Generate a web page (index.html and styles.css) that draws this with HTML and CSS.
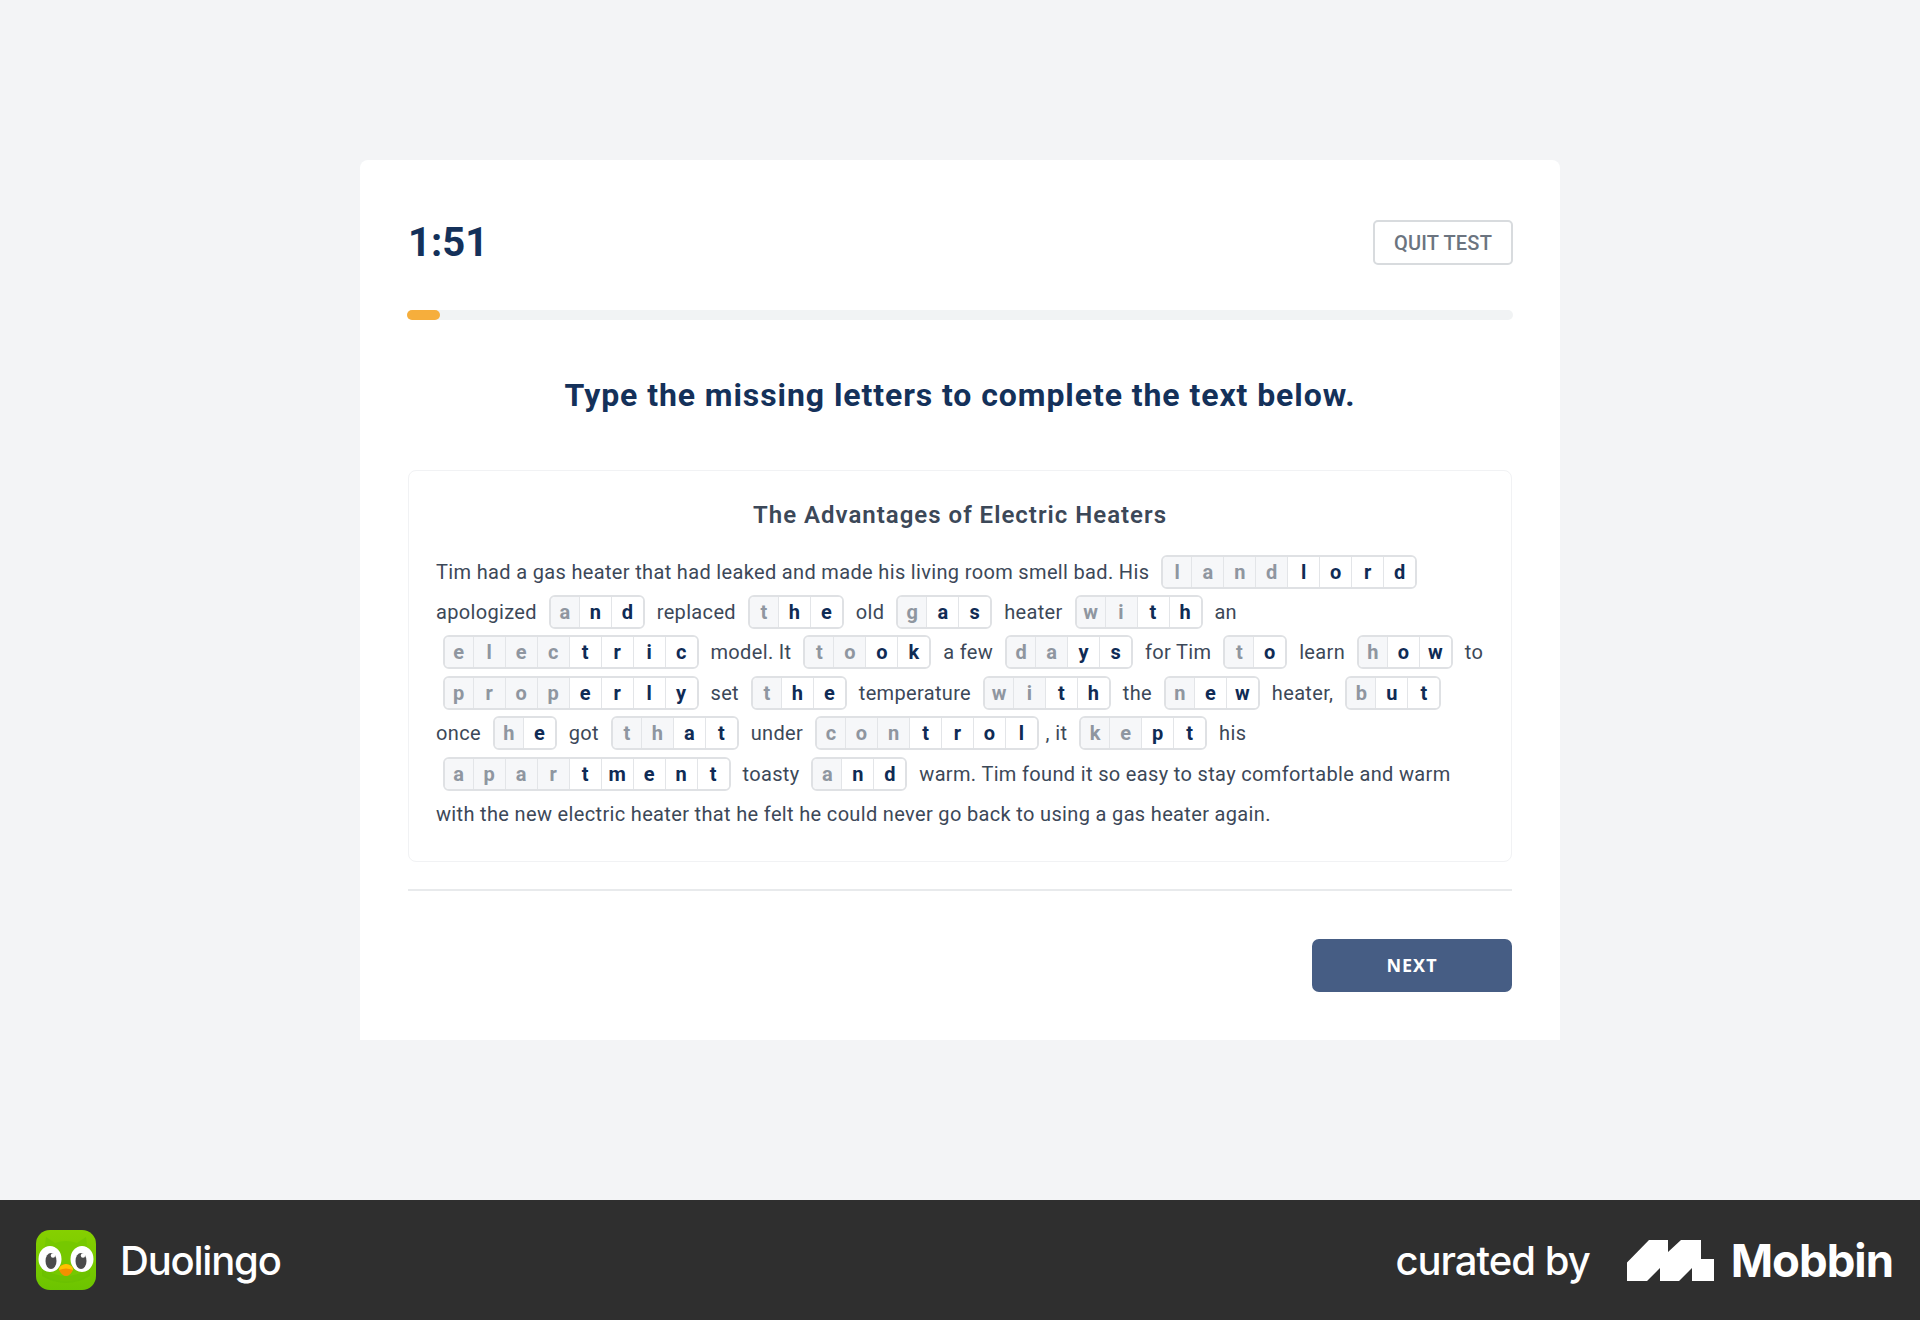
FILE: index.html
```html
<!DOCTYPE html>
<html lang="en">
<head>
<meta charset="utf-8">
<title>Duolingo English Test</title>
<link rel="stylesheet" href="styles.css">
</head>
<body>
<main class="stage">
  <section class="card">
    <header class="top">
      <div class="timer">1:51</div>
      <button class="quit">QUIT TEST</button>
    </header>
    <div class="track"><div class="fill"></div></div>
    <h1 class="prompt">Type the missing letters to complete the text below.</h1>
    <article class="passage">
      <h2 class="title">The Advantages of Electric Heaters</h2>
      <p class="body">Tim had a gas heater that had leaked and made his living room smell bad. His <span class="word"><i>l</i><i>a</i><i>n</i><i>d</i><b>l</b><b>o</b><b>r</b><b>d</b></span><br>
      apologized <span class="word"><i>a</i><b>n</b><b>d</b></span> replaced <span class="word"><i>t</i><b>h</b><b>e</b></span> old <span class="word"><i>g</i><b>a</b><b>s</b></span> heater <span class="word"><i>w</i><i>i</i><b>t</b><b>h</b></span> an<br>
      <span class="word"><i>e</i><i>l</i><i>e</i><i>c</i><b>t</b><b>r</b><b>i</b><b>c</b></span> model. It <span class="word"><i>t</i><i>o</i><b>o</b><b>k</b></span> a few <span class="word"><i>d</i><i>a</i><b>y</b><b>s</b></span> for Tim <span class="word"><i>t</i><b>o</b></span> learn <span class="word"><i>h</i><b>o</b><b>w</b></span> to<br>
      <span class="word"><i>p</i><i>r</i><i>o</i><i>p</i><b>e</b><b>r</b><b>l</b><b>y</b></span> set <span class="word"><i>t</i><b>h</b><b>e</b></span> temperature <span class="word"><i>w</i><i>i</i><b>t</b><b>h</b></span> the <span class="word"><i>n</i><b>e</b><b>w</b></span> heater, <span class="word"><i>b</i><b>u</b><b>t</b></span><br>
      once <span class="word"><i>h</i><b>e</b></span> got <span class="word"><i>t</i><i>h</i><b>a</b><b>t</b></span> under <span class="word"><i>c</i><i>o</i><i>n</i><b>t</b><b>r</b><b>o</b><b>l</b></span>, it <span class="word"><i>k</i><i>e</i><b>p</b><b>t</b></span> his<br>
      <span class="word"><i>a</i><i>p</i><i>a</i><i>r</i><b>t</b><b>m</b><b>e</b><b>n</b><b>t</b></span> toasty <span class="word"><i>a</i><b>n</b><b>d</b></span> warm. Tim found it so easy to stay comfortable and warm<br>
      with the new electric heater that he felt he could never go back to using a gas heater again.</p>
    </article>
    <hr class="rule">
    <div class="actions"><button class="next">NEXT</button></div>
  </section>
</main>
<footer class="brandbar">
  <div class="brand">
    <svg class="owl" viewBox="0 0 60 60" aria-hidden="true">
      <defs><linearGradient id="owlbg" x1="0" y1="0" x2="0" y2="1"><stop offset="0" stop-color="#86d000"/><stop offset="1" stop-color="#6cc400"/></linearGradient></defs>
      <rect width="60" height="60" rx="14" fill="url(#owlbg)"/>
      <path d="M10 7 L19 13 Q30 9 41 13 L50 7 L52 22 L52 45 Q30 58 8 45 L8 22 Z" fill="#76c800"/>
      <path d="M6 38 Q30 54 54 38 L54 46 Q30 60 6 46 Z" fill="#66bb00" opacity=".5"/>
      <ellipse cx="14" cy="29" rx="11.5" ry="13" fill="#fff"/>
      <ellipse cx="46" cy="29" rx="11.5" ry="13" fill="#fff"/>
      <ellipse cx="15" cy="31" rx="5.5" ry="8" fill="#4b4b4b"/>
      <ellipse cx="45" cy="31" rx="5.5" ry="8" fill="#4b4b4b"/>
      <circle cx="17" cy="25.5" r="2.2" fill="#fff"/>
      <circle cx="47" cy="25.5" r="2.2" fill="#fff"/>
      <path d="M30 34 Q37 35 37 40 Q34 46 30 46 Q26 46 23 40 Q23 35 30 34 Z" fill="#f49000"/>
      <path d="M30 34 Q37 35 37 40 Q30 37 23 40 Q23 35 30 34 Z" fill="#ffc200"/>
    </svg>
    <span class="brandname">Duolingo</span>
  </div>
  <div class="credit">
    <span class="curated">curated by</span>
    <svg class="mlogo" viewBox="0 0 87 41" aria-hidden="true"><path fill="#fff" d="M0 22.5 L22 0 L41 0 L41 12 L54 0 L74 0 L74 19 L87 19 L87 41 L65 41 L65 28 L52 41 L33 41 L33 28 L20 41 L0 41 Z"/></svg>
    <span class="mname">Mobbin</span>
  </div>
</footer>
</body>
</html>
```
FILE: styles.css
```css
* { box-sizing: border-box; }
html, body { margin: 0; padding: 0; }
body {
  width: 1920px;
  height: 1320px;
  display: flex;
  flex-direction: column;
  background: #f3f4f6;
  font-family: Roboto, "Noto Sans", sans-serif;
  color: #3c4858;
}
.stage {
  flex: 1;
  display: flex;
  justify-content: center;
  padding-top: 160px;
}
.card {
  width: 1200px;
  height: 880px;
  background: #fff;
  border-radius: 8px 8px 0 0;
  padding: 60px 47px 0;
}
.top {
  display: flex;
  justify-content: space-between;
  align-items: center;
  height: 45px;
  padding-left: 1px;
}
.timer {
  font-size: 40px;
  font-weight: 700;
  color: #14315a;
}
.quit {
  width: 140px;
  height: 45px;
  margin: 0;
  padding: 0;
  background: #fff;
  border: 2px solid #d8dbde;
  border-radius: 5px;
  font: 500 20px Roboto, sans-serif;
  letter-spacing: 0.2px;
  color: #6b7480;
}
.track {
  height: 10px;
  margin-top: 45px;
  background: #f1f3f4;
  border-radius: 5px;
}
.fill {
  width: 33px;
  height: 10px;
  background: #f6ae3c;
  border-radius: 5px;
}
.prompt {
  margin: 45px 0 0;
  height: 60px;
  text-align: center;
  font-size: 32px;
  line-height: 60px;
  font-weight: 700;
  letter-spacing: 0.92px;
  color: #14315a;
}
.passage {
  margin: 45px 1px 0;
  height: 392px;
  border: 1px solid #f1f2f4;
  border-radius: 8px;
  padding: 28px 27px 0;
}
.title {
  margin: 0;
  text-align: center;
  font-size: 24px;
  line-height: 32px;
  font-weight: 600;
  letter-spacing: 1px;
  color: #3c4858;
}
.body {
  margin: 20.5px 0 0;
  font-size: 20px;
  line-height: 40.4px;
  letter-spacing: 0.34px;
  white-space: nowrap;
  color: #3c4858;
}
.word {
  display: inline-flex;
  height: 34px;
  margin: 0 6.6px;
  vertical-align: baseline;
  border: 2px solid #dfe1e4;
  border-radius: 6px;
  overflow: hidden;
  line-height: 31px;
  font-size: 20px;
  letter-spacing: 0;
}
.word i, .word b {
  width: 32px;
  text-align: center;
  font-style: normal;
  font-weight: 700;
  border-left: 1px solid #e3e5e8;
}
.word i { color: #8f96a0; background: #f6f7f9; }
.word b { color: #0f2b55; background: #fff; }
.word > :first-child { width: 28px; border-left: 0; }
.rule {
  margin: 27px 1px 0;
  height: 2px;
  border: 0;
  background: #e8eaec;
}
.actions {
  display: flex;
  justify-content: flex-end;
  margin-top: 48px;
  padding-right: 1px;
}
.next {
  width: 200px;
  height: 53px;
  padding: 0 0 2px;
  border: 0;
  border-radius: 7px;
  background: #465d84;
  color: #fff;
  font: 700 18px "Noto Sans", sans-serif;
  letter-spacing: 1px;
}
.brandbar {
  height: 120px;
  flex: none;
  background: #2f2f2f;
  display: flex;
  justify-content: space-between;
  align-items: center;
  padding: 0 27px 0 36px;
  color: #fff;
}
.brand, .credit { display: flex; align-items: center; }
.owl { width: 60px; height: 60px; }
.brandname {
  margin-left: 24px;
  font: 500 40px Inter, sans-serif;
  letter-spacing: -1.2px;
}
.curated {
  font: 500 40px Inter, sans-serif;
  letter-spacing: -1px;
}
.mlogo { width: 87px; height: 41px; margin-left: 37px; }
.mname {
  margin-left: 17px;
  font: 700 45.5px Inter, sans-serif;
  letter-spacing: -1px;
}
```
